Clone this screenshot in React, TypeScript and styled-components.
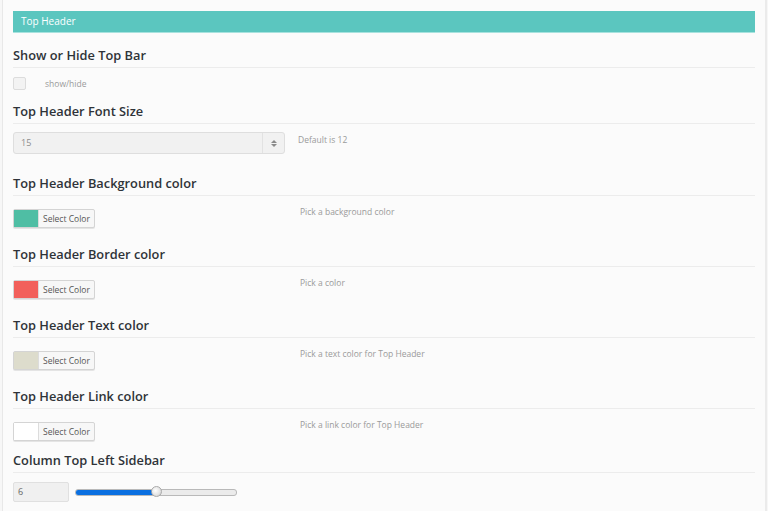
import React, { FC } from 'react';
import styled, { createGlobalStyle } from 'styled-components';

const GlobalStyle = createGlobalStyle`
  html, body {
    margin: 0;
    padding: 0;
    background: #f7f7f7;
  }
  body {
    font-family: 'Open Sans', 'Liberation Sans', sans-serif;
  }
`;

const Page = styled.div`
  width: 765px;
  height: 511px;
  margin-left: 2px;
  box-sizing: border-box;
  border-left: 1px solid #e8e8e8;
  border-right: 2px solid #ebebeb;
  background: #fbfbfb;
  padding: 11px 10px 0 10px;
  overflow: hidden;
`;

const HeaderBar = styled.div`
  height: 21px;
  background: #5bc6bf;
  border-bottom: 1px solid #a8e2de;
  color: #ffffff;
  font-size: 10px;
  line-height: 21px;
  padding-left: 8px;
`;

const Section = styled.section<{ $top: number }>`
  margin-top: ${({ $top }) => $top}px;
`;

const Title = styled.h4`
  margin: 0;
  font-size: 12.8px;
  font-weight: 600;
  color: #2f3338;
  line-height: 20px;
  padding-bottom: 2px;
  border-bottom: 1px solid #ececec;
`;

const Row = styled.div<{ $top: number }>`
  display: grid;
  grid-template-columns: 285px 1fr;
  align-items: start;
  margin-top: ${({ $top }) => $top}px;
`;

const Help = styled.span<{ $shift?: number; $dy?: number }>`
  font-size: 8.5px;
  color: #9a9a9a;
  line-height: 10px;
  margin-top: ${({ $dy }) => $dy ?? -2}px;
  padding-left: ${({ $shift }) => $shift ?? 2}px;
`;

const CheckRow = styled.div`
  display: flex;
  align-items: center;
  margin-top: 9px;
  height: 12px;
  gap: 19px;
`;

const Checkbox = styled.span`
  width: 11px;
  height: 11px;
  border: 1px solid #dcdcdc;
  border-radius: 2px;
  background: #f3f3f3;
`;

const CheckLabel = styled.span`
  font-size: 8.5px;
  color: #9a9a9a;
`;

const NumberBox = styled.div`
  display: flex;
  width: 272px;
  height: 22px;
  box-sizing: border-box;
  border: 1px solid #dedede;
  border-radius: 3px;
  background: #f1f1f1;
`;

const NumberValue = styled.span`
  flex: 1;
  font-size: 9px;
  color: #8c8c8c;
  line-height: 20px;
  padding-left: 7px;
`;

const Spinner = styled.span`
  width: 21px;
  border-left: 1px solid #e2e2e2;
  display: flex;
  flex-direction: column;
  align-items: center;
  justify-content: center;
  gap: 1px;
`;

const Arrow = styled.span<{ $down?: boolean }>`
  width: 0;
  height: 0;
  border-left: 3px solid transparent;
  border-right: 3px solid transparent;
  ${({ $down }) =>
    $down ? 'border-top: 3px solid #8a8a8a;' : 'border-bottom: 3px solid #8a8a8a;'}
`;

const Picker = styled.div`
  display: flex;
  width: 82px;
  height: 19px;
  box-sizing: border-box;
  border: 1px solid #d4d4d4;
  border-radius: 2px;
  background: #f7f7f7;
  box-shadow: 0 1px 0 #e4e4e4;
`;

const Swatch = styled.span<{ $color: string }>`
  width: 24px;
  background: ${({ $color }) => $color};
  border-right: 1px solid #dcdcdc;
`;

const PickerText = styled.span`
  font-size: 8.5px;
  color: #555;
  line-height: 17px;
  padding-left: 4px;
`;

const SliderRow = styled.div`
  display: flex;
  align-items: center;
  gap: 6px;
  margin-top: 9px;
`;

const SmallInput = styled.div`
  width: 56px;
  height: 20px;
  box-sizing: border-box;
  border: 1px solid #e0e0e0;
  border-radius: 2px;
  background: #f0f0f0;
  font-size: 9px;
  color: #666;
  line-height: 18px;
  padding-left: 4px;
`;

const Track = styled.div`
  position: relative;
  width: 162px;
  height: 7px;
  box-sizing: border-box;
  border: 1px solid #b9b9b9;
  border-radius: 3px;
  background: #ebebeb;
`;

const Fill = styled.div`
  height: 100%;
  background: #0a6fe0;
  border-radius: 2px 0 0 2px;
`;

const Thumb = styled.span`
  position: absolute;
  top: -4px;
  width: 11px;
  height: 11px;
  margin-left: -5px;
  border-radius: 50%;
  box-sizing: border-box;
  border: 1px solid #a9a9a9;
  background: radial-gradient(circle at 40% 40%, #ffffff 0%, #e2e2e2 60%, #c4c4c4 100%);
`;

const colorRows = [
  { title: 'Top Header Background color', color: '#4fbea4', help: 'Pick a background color', top: 19 },
  { title: 'Top Header Border color', color: '#f2605b', help: 'Pick a color', top: 16 },
  { title: 'Top Header Text color', color: '#dddccc', help: 'Pick a text color for Top Header', top: 16 },
  { title: 'Top Header Link color', color: '#ffffff', help: 'Pick a link color for Top Header', top: 16 },
];

const sliderValue = 6;
const sliderMax = 12;

const App: FC = () => (
  <>
    <GlobalStyle />
    <Page>
      <HeaderBar>Top Header</HeaderBar>

      <Section $top={12}>
        <Title>Show or Hide Top Bar</Title>
        <CheckRow>
          <Checkbox />
          <CheckLabel>show/hide</CheckLabel>
        </CheckRow>
      </Section>

      <Section $top={12}>
        <Title>Top Header Font Size</Title>
        <Row $top={8}>
          <NumberBox>
            <NumberValue>15</NumberValue>
            <Spinner>
              <Arrow />
              <Arrow $down />
            </Spinner>
          </NumberBox>
          <Help $shift={0} $dy={3}>Default is 12</Help>
        </Row>
      </Section>

      {colorRows.map((r) => (
        <Section key={r.title} $top={r.top}>
          <Title>{r.title}</Title>
          <Row $top={13}>
            <Picker>
              <Swatch $color={r.color} />
              <PickerText>Select Color</PickerText>
            </Picker>
            <Help>{r.help}</Help>
          </Row>
        </Section>
      ))}

      <Section $top={9}>
        <Title>Column Top Left Sidebar</Title>
        <SliderRow>
          <SmallInput>{sliderValue}</SmallInput>
          <Track>
            <Fill style={{ width: `${(sliderValue / sliderMax) * 100}%` }} />
            <Thumb style={{ left: `${(sliderValue / sliderMax) * 100}%` }} />
          </Track>
        </SliderRow>
      </Section>
    </Page>
  </>
);

export default App;
